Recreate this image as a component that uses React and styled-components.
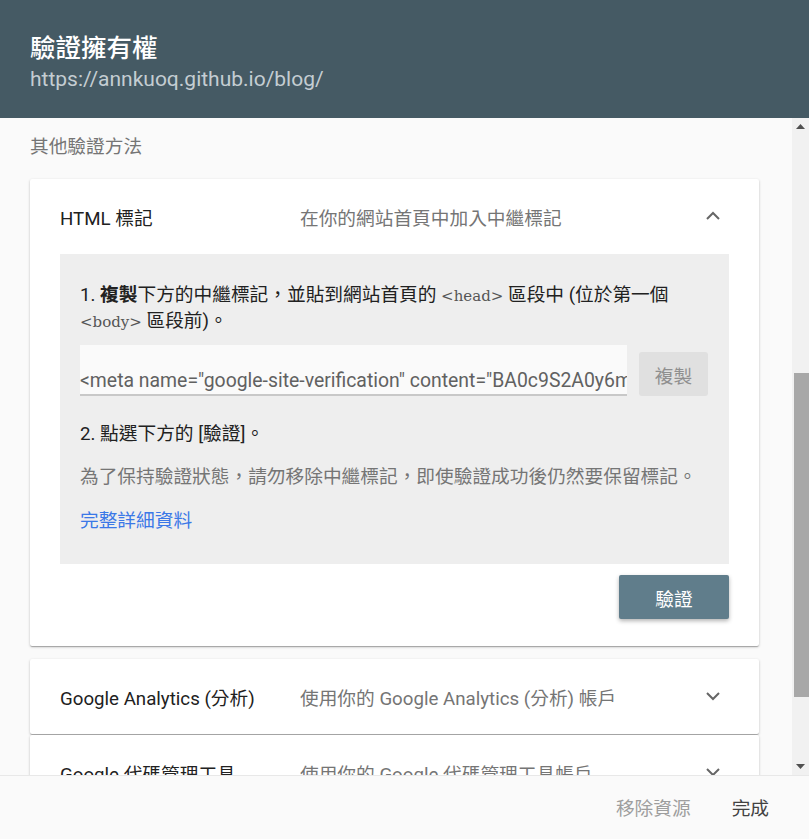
import React from 'react'
import styled, { createGlobalStyle } from 'styled-components'

const GlobalStyle = createGlobalStyle`
  html, body {
    margin: 0;
    padding: 0;
    background: #fafafa;
  }
  body {
    font-family: Roboto, "Noto Sans CJK TC", "Noto Sans", sans-serif;
    color: #212121;
  }
`

const Chevron = ({ up }) => (
  <svg width="24" height="24" viewBox="0 0 24 24">
    <polyline
      points={up ? '6,15 12,9 18,15' : '6,9 12,15 18,9'}
      fill="none"
      stroke="#666"
      strokeWidth="2"
    />
  </svg>
)

const Arrow = ({ down }) => (
  <svg width="9" height="5" viewBox="0 0 9 5">
    <polygon points={down ? '0,0 9,0 4.5,5' : '0,5 9,5 4.5,0'} fill="#505050" />
  </svg>
)

class App extends React.Component {
  render() {
    return (
      <Dialog>
        <GlobalStyle />
        <Header>
          <Title>驗證擁有權</Title>
          <SiteUrl>https://annkuoq.github.io/blog/</SiteUrl>
        </Header>

        <Body>
          <Content>
            <SectionLabel>其他驗證方法</SectionLabel>

            <Panel>
              <PanelHeader>
                <PanelName>HTML 標記</PanelName>
                <PanelDesc>在你的網站首頁中加入中繼標記</PanelDesc>
                <Chevron up />
              </PanelHeader>
              <PanelBody>
                <Instructions>
                  <Step>
                    1. <b>複製</b>下方的中繼標記，並貼到網站首頁的 <Code>&lt;head&gt;</Code> 區段中 (位於第一個 <Code>&lt;body&gt;</Code> 區段前)。
                  </Step>
                  <CopyRow>
                    <MetaField>
                      &lt;meta name="google-site-verification" content="BA0c9S2A0y6mQeXwYk1cE3pLr8h" /&gt;
                    </MetaField>
                    <CopyButton>複製</CopyButton>
                  </CopyRow>
                  <Step>2. 點選下方的 [驗證]。</Step>
                  <Note>為了保持驗證狀態，請勿移除中繼標記，即使驗證成功後仍然要保留標記。</Note>
                  <DetailsLink href="#">完整詳細資料</DetailsLink>
                </Instructions>
                <Actions>
                  <VerifyButton>驗證</VerifyButton>
                </Actions>
              </PanelBody>
            </Panel>

            <Panel gap={13}>
              <PanelHeader>
                <PanelName>Google Analytics (分析)</PanelName>
                <PanelDesc>使用你的 Google Analytics (分析) 帳戶</PanelDesc>
                <Chevron />
              </PanelHeader>
            </Panel>

            <Panel gap={1}>
              <PanelHeader>
                <PanelName>Google 代碼管理工具</PanelName>
                <PanelDesc>使用你的 Google 代碼管理工具帳戶</PanelDesc>
                <Chevron />
              </PanelHeader>
            </Panel>
          </Content>

          <ScrollTrack>
            <ScrollArrow>
              <Arrow />
            </ScrollArrow>
            <ScrollRail>
              <ScrollThumb />
            </ScrollRail>
            <ScrollArrow>
              <Arrow down />
            </ScrollArrow>
          </ScrollTrack>
        </Body>

        <Footer>
          <TextButton muted>移除資源</TextButton>
          <TextButton>完成</TextButton>
        </Footer>
      </Dialog>
    )
  }
}

const Dialog = styled.div`
  display: flex;
  flex-direction: column;
  width: 809px;
  height: 839px;
  overflow: hidden;
  background: #fafafa;
  font-size: 18.7px;
`

const Header = styled.header`
  flex: none;
  height: 118px;
  box-sizing: border-box;
  padding: 31px 30px 0;
  background: #455a64;
`

const Title = styled.h1`
  margin: 0;
  font-size: 25.5px;
  line-height: 34px;
  font-weight: 500;
  color: #fff;
`

const SiteUrl = styled.div`
  font-size: 21px;
  line-height: 28px;
  color: #c4cdd2;
`

const Body = styled.div`
  flex: 1;
  position: relative;
  overflow: hidden;
`

const Content = styled.div`
  padding: 17px 50px 0 30px;
`

const SectionLabel = styled.div`
  line-height: 24px;
  color: #757575;
  margin-bottom: 20px;
`

const Panel = styled.section`
  margin-top: ${props => props.gap || 0}px;
  padding: 0 30px;
  background: #fff;
  border-radius: 2px;
  box-shadow: 0 1px 3px rgba(0, 0, 0, 0.2), 0 1px 1px rgba(0, 0, 0, 0.14),
    0 2px 1px -1px rgba(0, 0, 0, 0.12);
`

const PanelHeader = styled.div`
  display: flex;
  align-items: center;
  height: 75px;
  padding-right: 4px;
  padding-bottom: 1px;
  box-sizing: border-box;
`

const PanelName = styled.div`
  width: 240px;
  flex: none;
  color: #212121;
`

const PanelDesc = styled.div`
  flex: 1;
  color: #757575;
`

const PanelBody = styled.div`
  padding-bottom: 27px;
`

const Instructions = styled.div`
  background: #eeeeee;
  padding: 29px 20px 30px;
`

const Step = styled.p`
  margin: 0;
  line-height: 25px;
  color: #212121;

  b {
    font-weight: 700;
  }
`

const Code = styled.code`
  font-family: "DejaVu Serif", "Liberation Serif", serif;
  font-size: 15px;
  color: #555;
  white-space: nowrap;
`

const CopyRow = styled.div`
  display: flex;
  align-items: flex-end;
  gap: 12px;
  margin: 10px 0 26px;
`

const MetaField = styled.div`
  flex: 1;
  min-width: 0;
  height: 51px;
  box-sizing: border-box;
  padding-bottom: 2px;
  display: flex;
  align-items: flex-end;
  background: #fafafa;
  border-bottom: 2px solid #c8c8c8;
  font-size: 19.4px;
  color: #616161;
  white-space: nowrap;
  overflow: hidden;
`

const CopyButton = styled.button`
  flex: none;
  width: 69px;
  height: 44px;
  margin-right: 1px;
  border: none;
  border-radius: 3px;
  background: #e0e0e0;
  color: #8f8f8f;
  font: inherit;
`

const Note = styled.p`
  margin: 18px 0 0;
  line-height: 25px;
  color: #757575;
`

const DetailsLink = styled.a`
  display: block;
  margin-top: 19px;
  line-height: 25px;
  color: #3b78e7;
  text-decoration: none;
`

const Actions = styled.div`
  display: flex;
  justify-content: flex-end;
  margin-top: 11px;
`

const VerifyButton = styled.button`
  width: 110px;
  height: 44px;
  border: none;
  border-radius: 2px;
  background: #607d8b;
  color: #fff;
  font: inherit;
  box-shadow: 0 2px 4px rgba(0, 0, 0, 0.3);
`

const ScrollTrack = styled.div`
  position: absolute;
  top: 0;
  right: 0;
  bottom: 0;
  width: 17px;
  display: flex;
  flex-direction: column;
  background: #f1f1f1;
`

const ScrollArrow = styled.div`
  flex: none;
  height: 17px;
  display: flex;
  align-items: center;
  justify-content: center;
`

const ScrollRail = styled.div`
  flex: 1;
  padding-top: 238px;
  box-sizing: border-box;
`

const ScrollThumb = styled.div`
  height: 324px;
  margin-left: 2px;
  background: #a8a8a8;
`

const Footer = styled.footer`
  flex: none;
  height: 64px;
  box-sizing: border-box;
  display: flex;
  align-items: center;
  justify-content: flex-end;
  gap: 41px;
  padding: 0 40px 2px 0;
  background: #fafafa;
  border-top: 1px solid #e8e8e8;
  position: relative;
  z-index: 1;
`

const TextButton = styled.button`
  border: none;
  background: none;
  padding: 0;
  font: inherit;
  color: ${props => (props.muted ? '#9e9e9e' : '#424242')};
`

export default App
